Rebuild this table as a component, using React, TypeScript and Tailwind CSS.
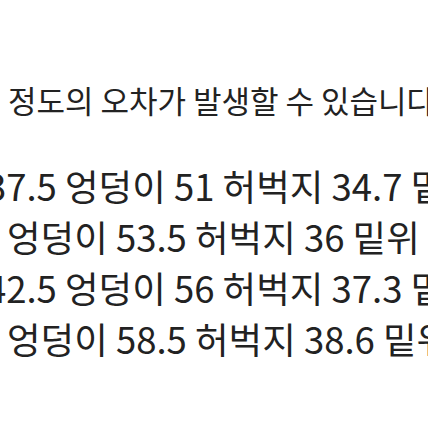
const FONT = "font-['Noto_Sans_CJK_KR','Noto_Sans',sans-serif]"

const LINES = [
  { prefix: '허리 37.5 ', prefixW: 'w-[65px]', text: '엉덩이 51 허벅지 34.7 밑위 26' },
  { prefix: '허리 40 ', prefixW: 'w-[7px]', text: '엉덩이 53.5 허벅지 36 밑위 27' },
  { prefix: '허리 42.5 ', prefixW: 'w-[65px]', text: '엉덩이 56 허벅지 37.3 밑위 28' },
  { prefix: '허리 45 ', prefixW: 'w-[7px]', text: '엉덩이 58.5 허벅지 38.6 밑위 29' },
]

export default function App() {
  return (
    <div className={`w-[428px] h-[428px] overflow-hidden bg-white text-[#222] ${FONT}`}>
      <div className="pt-[79px]">
        <div className="flex whitespace-nowrap text-[31px] leading-[42px]">
          <span className="flex justify-end overflow-hidden shrink-0 w-[8px]">
            <span className="whitespace-pre">1~3cm </span>
          </span>
          <span>정도의 오차가 발생할 수 있습니다.</span>
        </div>
        <div className="mt-[39px] flex flex-col">
          {LINES.map(l => (
            <div key={l.text} className="flex whitespace-nowrap text-[36.5px] leading-[51px]">
              <span className={`flex justify-end overflow-hidden shrink-0 ${l.prefixW}`}>
                <span className="whitespace-pre">{l.prefix}</span>
              </span>
              <span>{l.text}</span>
            </div>
          ))}
        </div>
      </div>
    </div>
  )
}
